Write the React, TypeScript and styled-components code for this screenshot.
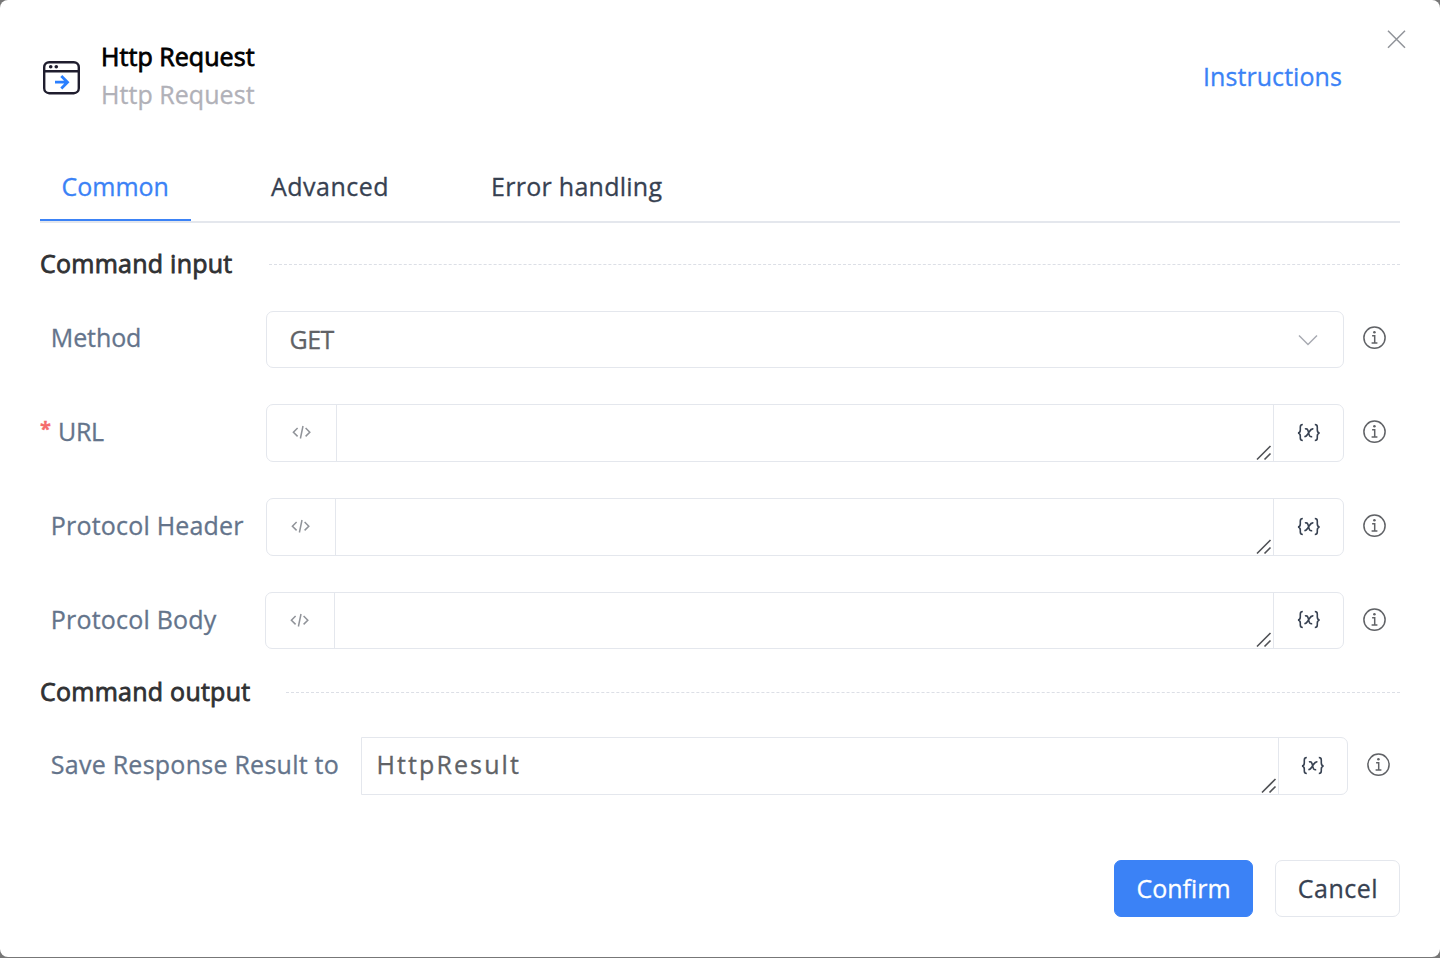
import React from "react";
import styled, { createGlobalStyle } from "styled-components";

const GlobalStyle = createGlobalStyle`
  *, *::before, *::after { box-sizing: border-box; }
  body {
    margin: 0;
    background: #777777;
    font-family: "Open Sans", "Noto Sans", sans-serif;
    font-size: 25px;
    line-height: 38px;
    color: #374151;
    -webkit-text-stroke: 0.3px currentColor;
  }
`;

const Dialog = styled.div`
  display: flex;
  flex-direction: column;
  width: 1440px;
  height: 957px;
  margin-bottom: 1px;
  padding: 37px 40px 0;
  border-radius: 8px;
  background: #fff;
  white-space: nowrap;
`;

const Header = styled.header`
  display: flex;
  height: 76px;
`;

const AppIcon = styled.svg`
  flex: none;
  margin: 23px 20px 0 2px;
`;

const Titles = styled.div`
  flex: 1;
`;

const Title = styled.div<{ $muted?: boolean }>`
  color: ${(p) => (p.$muted ? "#b1b1b8" : "#000")};
  -webkit-text-stroke: ${(p) => (p.$muted ? "0.3px" : "0.8px")} currentColor;
  letter-spacing: 0.05px;
`;

const HelpLink = styled.a`
  margin: 20px 44px 0 0;
  color: #3b82f6;
  letter-spacing: 0.07px;
`;

const CloseIcon = styled.svg`
  flex: none;
  margin: -8px -7px 0 0;
`;

const Tabs = styled.nav`
  display: flex;
  height: 70px;
  margin-top: 40px;
  border-bottom: 2px solid #e4e7ed;
`;

const Tab = styled.div<{ $active?: boolean; $spacing?: number }>`
  height: 68px;
  margin-right: 58.5px;
  padding: 14px 22px 0 21.5px;
  letter-spacing: ${(p) => p.$spacing ?? 0}px;
  color: ${(p) => (p.$active ? "#3b82f6" : "#374151")};
  border-bottom: ${(p) => (p.$active ? "2px solid #3b82f6" : "0")};
`;

const SectionTitle = styled.div<{ $top: number }>`
  display: flex;
  height: 38px;
  margin-top: ${(p) => p.$top}px;
  color: #303133;
  letter-spacing: 0.25px;
  -webkit-text-stroke: 0.8px currentColor;
`;

const DashedLine = styled.div`
  flex: 1;
  height: 1px;
  margin: 20px 0 0 36px;
  border-top: 1px dashed #dcdfe6;
`;

const Row = styled.div<{ $top: number; $height: number; $end?: number }>`
  display: flex;
  height: ${(p) => p.$height}px;
  margin-top: ${(p) => p.$top}px;
  padding-right: ${(p) => p.$end ?? 13}px;
`;

const Label = styled.label<{ $width: number; $spacing?: number; $top?: number }>`
  flex: none;
  display: flex;
  width: ${(p) => p.$width}px;
  padding-top: ${(p) => p.$top ?? 8}px;
  padding-left: 10.8px;
  color: #64748b;
  letter-spacing: ${(p) => p.$spacing ?? 0}px;
`;

const Required = styled.span`
  width: 18px;
  margin-left: -10.8px;
  color: #f56c6c;
  font-size: 20px;
  font-weight: 700;
  line-height: 34px;
`;

const Control = styled.div<{ $squareLeft?: boolean }>`
  flex: 1;
  display: flex;
  border: 1px solid #e4e7ed;
  border-radius: ${(p) => (p.$squareLeft ? "0 7px 7px 0" : "7px")};
`;

const Value = styled.div<{ $indent: number; $spacing?: number; $top: number }>`
  flex: 1;
  padding: ${(p) => p.$top}px 0 0 ${(p) => p.$indent}px;
  color: #606266;
  letter-spacing: ${(p) => p.$spacing ?? 0}px;
`;

const Addon = styled.div<{ $width: number; $side: "left" | "right" }>`
  flex: none;
  display: flex;
  align-items: center;
  justify-content: center;
  width: ${(p) => p.$width}px;
  padding-bottom: ${(p) => (p.$side === "left" ? 2 : 1)}px;
  border-${(p) => (p.$side === "left" ? "right" : "left")}: 1px solid #e4e7ed;
`;

const Grip = styled.svg`
  flex: none;
  align-self: flex-end;
  margin-right: 1px;
`;

const Arrow = styled.svg`
  flex: none;
  align-self: center;
  margin-right: 25px;
`;

const Info = styled.svg<{ $top: number }>`
  flex: none;
  margin: ${(p) => p.$top}px 0 0 18px;
`;

const Footer = styled.footer`
  display: flex;
  justify-content: flex-end;
  gap: 22px;
  margin-top: 65px;
`;

const Button = styled.button<{ $primary?: boolean }>`
  width: ${(p) => (p.$primary ? 139 : 125)}px;
  height: 57px;
  padding: 0 0 1px;
  border: 1px solid ${(p) => (p.$primary ? "#3b82f6" : "#e4e7ed")};
  border-radius: 7px;
  background: ${(p) => (p.$primary ? "#3b82f6" : "#fff")};
  color: ${(p) => (p.$primary ? "#fff" : "#374151")};
  font: inherit;
  letter-spacing: ${(p) => (p.$primary ? 0 : 0.5)}px;
  text-indent: ${(p) => (p.$primary ? 0 : 1)}px;
`;

const InfoIcon = ({ top = 15 }: { top?: number }) => (
  <Info $top={top} width="25" height="25" viewBox="0 0 25 25" fill="none" stroke="#606266" strokeWidth="1.5">
    <circle cx="12.5" cy="11.7" r="10.6" />
    <path d="M10.1 9.7h2.6v7.1M9.6 16.9h5.8" />
    <circle cx="12.4" cy="6.3" r="1.3" fill="#606266" stroke="none" />
  </Info>
);

const CodeIcon = () => (
  <svg width="20" height="14" viewBox="0 0 20 14" fill="none" stroke="#909399" strokeWidth="1.5">
    <path d="M5.6 3 1.4 7.2l4.2 4.2M13.6 3l4.2 4.2-4.2 4.2M11 1 8.4 13.5" />
  </svg>
);

const VariableIcon = () => (
  <svg width="24" height="20" viewBox="0 0 24 20" fill="none" stroke="#374151" strokeWidth="1.6">
    <path d="M5.8 1.5C3.6 1.5 3.3 2.4 3.3 4v3c0 2-.7 2.8-2.3 3 1.6.2 2.3 1 2.3 3v2c0 1.6.3 2.5 2.5 2.5M17.8 1.5c2.2 0 2.5.9 2.5 2.5v3c0 2 .7 2.8 2.3 3-1.6.2-2.3 1-2.3 3v2c0 1.6-.3 2.5-2.5 2.5" />
    <path d="M7.900 5.900c1.800-.5 2.700.2 3.200 2l1 3.700c.5 1.800 1.300 2.500 3.100 1.900M16.400 6c-1.700-.5-2.900.7-4.300 3-1.600 2.700-2.700 5-4.800 4.500" />
  </svg>
);

const ResizeGrip = () => (
  <Grip width="16" height="16" viewBox="0 0 16 16" stroke="#505256" strokeWidth="1.6">
    <path d="M1 14.5 14.5 1M8.5 14.5 14.5 8.5" />
  </Grip>
);

const VariableAddon = ({ width = 70 }: { width?: number }) => (
  <Addon $width={width} $side="right">
    <VariableIcon />
  </Addon>
);

interface FieldProps {
  label: string;
  spacing: number;
  required?: boolean;
  height: number;
  labelWidth: number;
  addonWidth: number;
}

const ExpressionField = ({ label, spacing, required, height, labelWidth, addonWidth }: FieldProps) => (
  <Row $top={36} $height={height}>
    <Label $width={labelWidth} $spacing={spacing}>
      {required && <Required>*</Required>}
      {label}
    </Label>
    <Control>
      <Addon $width={addonWidth} $side="left">
        <CodeIcon />
      </Addon>
      <Value $top={8} $indent={15} />
      <ResizeGrip />
      <VariableAddon />
    </Control>
    <InfoIcon top={16} />
  </Row>
);

export default function App() {
  return (
    <>
      <GlobalStyle />
      <Dialog>
        <Header>
          <AppIcon width="39" height="36" viewBox="0 0 39 36" fill="none" stroke="#1f1d2e" strokeWidth="2.4">
            <rect x="2.2" y="2.2" width="34.6" height="31" rx="5" />
            <path d="M2.2 11.3h34.6" />
            <circle cx="8.7" cy="6.8" r="1.8" fill="#1f1d2e" stroke="none" />
            <circle cx="14.3" cy="6.8" r="1.8" fill="#1f1d2e" stroke="none" />
            <path d="M13 22.2h12M19.3 16l6.2 6.2-6.2 6.2" stroke="#2a7fff" strokeWidth="2.8" />
          </AppIcon>
          <Titles>
            <Title>Http Request</Title>
            <Title $muted>Http Request</Title>
          </Titles>
          <HelpLink>Instructions</HelpLink>
          <CloseIcon width="21" height="20" viewBox="0 0 21 20" stroke="#909399" strokeWidth="1.5">
            <path d="M2 1.8l17 17M19 1.8l-17 17" />
          </CloseIcon>
        </Header>

        <Tabs>
          <Tab $active>Common</Tab>
          <Tab $spacing={0.5}>Advanced</Tab>
          <Tab $spacing={0.27}>Error handling</Tab>
        </Tabs>

        <SectionTitle $top={21}>
          Command input
          <DashedLine />
        </SectionTitle>

        <Row $top={29} $height={57}>
          <Label $width={226} $spacing={-0.1} $top={7}>Method</Label>
          <Control>
            <Value $indent={22.5} $top={8} $spacing={-0.5}>GET</Value>
            <Arrow width="20" height="12" viewBox="0 0 20 12" fill="none" stroke="#a8abb2" strokeWidth="1.5">
              <path d="M1 1.5 10 10.5 19 1.5" />
            </Arrow>
          </Control>
          <InfoIcon />
        </Row>
        <ExpressionField label="URL" spacing={-0.3} required height={58} labelWidth={226} addonWidth={70} />
        <ExpressionField label="Protocol Header" spacing={0.2} height={58} labelWidth={226} addonWidth={69} />
        <ExpressionField label="Protocol Body" spacing={0.2} height={57} labelWidth={225} addonWidth={69} />

        <SectionTitle $top={23}>
          Command output
          <DashedLine />
        </SectionTitle>

        <Row $top={27} $height={58} $end={9}>
          <Label $width={321} $spacing={0.25}>Save Response Result to</Label>
          <Control $squareLeft>
            <Value $indent={14.5} $spacing={2.1} $top={7}>HttpResult</Value>
            <ResizeGrip />
            <VariableAddon width={69} />
          </Control>
          <InfoIcon top={16} />
        </Row>

        <Footer>
          <Button $primary>Confirm</Button>
          <Button>Cancel</Button>
        </Footer>
      </Dialog>
    </>
  );
}
